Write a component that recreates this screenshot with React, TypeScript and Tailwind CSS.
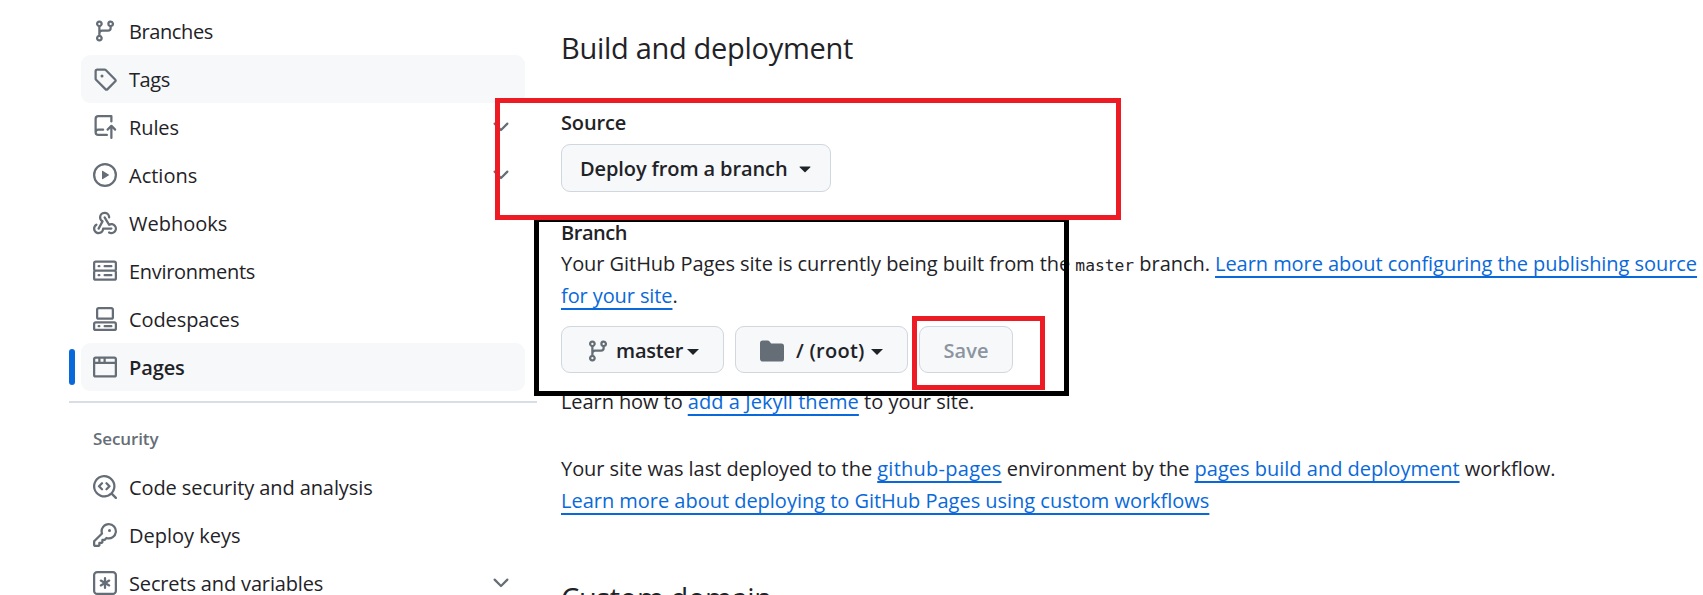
import type { ReactNode } from "react";

const icons = {
  branch: "M9.5 3.25a2.25 2.25 0 1 1 3 2.122V6A2.5 2.5 0 0 1 10 8.5H6a1 1 0 0 0-1 1v1.128a2.251 2.251 0 1 1-1.5 0V5.372a2.25 2.25 0 1 1 1.5 0v1.836A2.493 2.493 0 0 1 6 7h4a1 1 0 0 0 1-1v-.628A2.25 2.25 0 0 1 9.5 3.25Zm-6 0a.75.75 0 1 0 1.5 0 .75.75 0 0 0-1.5 0Zm8.25-.75a.75.75 0 1 0 0 1.5.75.75 0 0 0 0-1.5ZM4.25 12a.75.75 0 1 0 0 1.5.75.75 0 0 0 0-1.5Z",
  tag: "M1 7.775V2.75C1 1.784 1.784 1 2.75 1h5.025c.464 0 .91.184 1.238.513l6.25 6.25a1.75 1.75 0 0 1 0 2.474l-5.026 5.026a1.75 1.75 0 0 1-2.474 0l-6.25-6.25A1.752 1.752 0 0 1 1 7.775Zm1.5 0c0 .066.026.13.073.177l6.25 6.25a.25.25 0 0 0 .354 0l5.025-5.025a.25.25 0 0 0 0-.354l-6.25-6.25a.25.25 0 0 0-.177-.073H2.75a.25.25 0 0 0-.25.25ZM6 5a1 1 0 1 1 0 2 1 1 0 0 1 0-2Z",
  repoPush: "M1 2.5A2.5 2.5 0 0 1 3.5 0h8.75a.75.75 0 0 1 .75.75v3.5a.75.75 0 0 1-1.5 0V1.5h-8a1 1 0 0 0-1 1v6.708A2.493 2.493 0 0 1 3.5 9h3.25a.75.75 0 0 1 0 1.5H3.5a1 1 0 0 0 0 2h5.75a.75.75 0 0 1 0 1.5H3.5A2.5 2.5 0 0 1 1 11.5Zm13.23 7.79h-.001l-1.224-1.224v6.184a.75.75 0 0 1-1.5 0V9.066L10.28 10.29a.75.75 0 0 1-1.06-1.061l2.505-2.504a.75.75 0 0 1 1.06 0L15.29 9.23a.751.751 0 0 1-.018 1.042.751.751 0 0 1-1.042.018Z",
  play: "M8 0a8 8 0 1 1 0 16A8 8 0 0 1 8 0ZM1.5 8a6.5 6.5 0 1 0 13 0 6.5 6.5 0 0 0-13 0Zm4.879-2.773 4.264 2.559a.25.25 0 0 1 0 .428l-4.264 2.559A.25.25 0 0 1 6 10.559V5.442a.25.25 0 0 1 .379-.215Z",
  webhook: "M5.5 4.25a2.25 2.25 0 0 1 4.5 0 .75.75 0 0 0 1.5 0 3.75 3.75 0 1 0-6.14 2.889l-2.272 4.258a.75.75 0 0 0 1.324.706L7 7.25a.75.75 0 0 0-.309-1.015A2.25 2.25 0 0 1 5.5 4.25Z M7.364 3.607a.75.75 0 0 1 1.03.257l2.608 4.349a3.75 3.75 0 1 1-.628 6.785.75.75 0 0 1 .752-1.299 2.25 2.25 0 1 0-.033-3.88.75.75 0 0 1-1.03-.256L7.107 4.636a.75.75 0 0 1 .257-1.03Z M2.9 8.776A.75.75 0 0 1 2.625 9.8 2.25 2.25 0 1 0 6 11.75a.75.75 0 0 1 .75-.751h5.5a.75.75 0 0 1 0 1.5H7.425a3.751 3.751 0 1 1-5.55-3.998.75.75 0 0 1 1.024.274Z",
  server: "M1.75 1h12.5c.966 0 1.75.784 1.75 1.75v4c0 .372-.116.717-.314 1 .198.283.314.628.314 1v4a1.75 1.75 0 0 1-1.75 1.75H1.75A1.75 1.75 0 0 1 0 12.75v-4c0-.358.109-.707.314-1a1.739 1.739 0 0 1-.314-1v-4C0 1.784.784 1 1.75 1ZM1.5 2.75v4c0 .138.112.25.25.25h12.5a.25.25 0 0 0 .25-.25v-4a.25.25 0 0 0-.25-.25H1.75a.25.25 0 0 0-.25.25Zm.25 5.75a.25.25 0 0 0-.25.25v4c0 .138.112.25.25.25h12.5a.25.25 0 0 0 .25-.25v-4a.25.25 0 0 0-.25-.25ZM7 4.75A.75.75 0 0 1 7.75 4h4.5a.75.75 0 0 1 0 1.5h-4.5A.75.75 0 0 1 7 4.75ZM7.75 10h4.5a.75.75 0 0 1 0 1.5h-4.5a.75.75 0 0 1 0-1.5ZM3 4.75A.75.75 0 0 1 3.75 4h.5a.75.75 0 0 1 0 1.5h-.5A.75.75 0 0 1 3 4.75ZM3.75 10h.5a.75.75 0 0 1 0 1.5h-.5a.75.75 0 0 1 0-1.5Z",
  codespaces: "M0 11.25c0-.966.784-1.75 1.75-1.75h12.5c.966 0 1.75.784 1.75 1.75v3A1.75 1.75 0 0 1 14.25 16H1.75A1.75 1.75 0 0 1 0 14.25Zm2-9.5C2 .784 2.784 0 3.75 0h8.5C13.216 0 14 .784 14 1.75v5a1.75 1.75 0 0 1-1.75 1.75h-8.5A1.75 1.75 0 0 1 2 6.75Zm1.75-.25a.25.25 0 0 0-.25.25v5c0 .138.112.25.25.25h8.5a.25.25 0 0 0 .25-.25v-5a.25.25 0 0 0-.25-.25Zm-2 9.5a.25.25 0 0 0-.25.25v3c0 .138.112.25.25.25h12.5a.25.25 0 0 0 .25-.25v-3a.25.25 0 0 0-.25-.25Z M7 12.75a.75.75 0 0 1 .75-.75h4.5a.75.75 0 0 1 0 1.5h-4.5a.75.75 0 0 1-.75-.75Zm-4 0a.75.75 0 0 1 .75-.75h.5a.75.75 0 0 1 0 1.5h-.5a.75.75 0 0 1-.75-.75Z",
  browser: "M0 2.75C0 1.784.784 1 1.75 1h12.5c.966 0 1.75.784 1.75 1.75v10.5A1.75 1.75 0 0 1 14.25 15H1.75A1.75 1.75 0 0 1 0 13.25ZM14.5 6h-13v7.25c0 .138.112.25.25.25h12.5a.25.25 0 0 0 .25-.25Zm-6-3.5v2h6V2.75a.25.25 0 0 0-.25-.25ZM5 2.5v2h2v-2Zm-3.25 0a.25.25 0 0 0-.25.25V4.5h2v-2Z",
  codescan: "M8.47 4.97a.75.75 0 0 0 0 1.06L9.94 7.5 8.47 8.97a.75.75 0 1 0 1.06 1.06l2-2a.75.75 0 0 0 0-1.06l-2-2a.75.75 0 0 0-1.06 0ZM6.53 6.03a.75.75 0 0 0-1.06-1.06l-2 2a.75.75 0 0 0 0 1.06l2 2a.75.75 0 1 0 1.06-1.06L5.06 7.5l1.47-1.47Z M12.246 13.307a7.501 7.501 0 1 1 1.06-1.06l2.474 2.473a.749.749 0 1 1-1.06 1.06l-2.474-2.473ZM1.5 7.5a6.002 6.002 0 0 0 3.608 5.504 6.002 6.002 0 0 0 6.486-1.117.748.748 0 0 1 .292-.293A6 6 0 1 0 1.5 7.5Z",
  key: "M10.5 0a5.499 5.499 0 1 1-1.288 10.848l-.932.932a.749.749 0 0 1-.53.22H7v.75a.749.749 0 0 1-.22.53l-.5.5a.749.749 0 0 1-.53.22H5v.75a.749.749 0 0 1-.22.53l-.5.5a.749.749 0 0 1-.53.22h-2A1.75 1.75 0 0 1 0 14.25v-2c0-.199.079-.389.22-.53l4.932-4.932A5.5 5.5 0 0 1 10.5 0Zm-4 5.5c-.001.431.069.86.205 1.269a.75.75 0 0 1-.181.768L1.5 12.56v1.69c0 .138.112.25.25.25h1.69l.06-.06v-1.19a.75.75 0 0 1 .75-.75h1.19l.06-.06v-1.19a.75.75 0 0 1 .75-.75h1.19l1.023-1.025a.75.75 0 0 1 .768-.18A4 4 0 1 0 6.5 5.5ZM11 6a1 1 0 1 1 0-2 1 1 0 0 1 0 2Z",
  keyAsterisk: "M0 2.75A2.75 2.75 0 0 1 2.75 0h10.5A2.75 2.75 0 0 1 16 2.75v10.5A2.75 2.75 0 0 1 13.25 16H2.75A2.75 2.75 0 0 1 0 13.25ZM2.75 1.5c-.69 0-1.25.56-1.25 1.25v10.5c0 .69.56 1.25 1.25 1.25h10.5c.69 0 1.25-.56 1.25-1.25V2.75c0-.69-.56-1.25-1.25-1.25Z M8 4a.75.75 0 0 1 .75.75V6.7l1.69-.975a.75.75 0 0 1 .75 1.3L9.5 8l1.69.976a.75.75 0 0 1-.75 1.298L8.75 9.3v1.951a.75.75 0 0 1-1.5 0V9.299l-1.69.976a.75.75 0 0 1-.75-1.3L6.5 8l-1.69-.975a.75.75 0 0 1 .75-1.3l1.69.976V4.75A.75.75 0 0 1 8 4Z",
  chevron: "M12.78 5.22a.749.749 0 0 1 0 1.06l-4.25 4.25a.749.749 0 0 1-1.06 0L3.22 6.28a.749.749 0 1 1 1.06-1.06L8 8.939l3.72-3.719a.749.749 0 0 1 1.06 0Z",
  triangle: "m4.427 7.427 3.396 3.396a.25.25 0 0 0 .354 0l3.396-3.396A.25.25 0 0 0 11.396 7H4.604a.25.25 0 0 0-.177.427Z",
  folder: "M1.75 1A1.75 1.75 0 0 0 0 2.75v10.5C0 14.216.784 15 1.75 15h12.5A1.75 1.75 0 0 0 16 13.25v-8.5A1.75 1.75 0 0 0 14.25 3H7.5a.25.25 0 0 1-.2-.1l-.9-1.2C6.07 1.26 5.55 1 5 1H1.75Z",
};

type IconName = keyof typeof icons;

function Icon({ name, className = "text-[#656d76]" }: { name: IconName; className?: string }) {
  return (
    <svg viewBox="0 0 16 16" fill="currentColor" className={`size-6 shrink-0 ${className}`}>
      <path d={icons[name]} />
    </svg>
  );
}

type Item = { label: string; icon: IconName; tracking?: string; hovered?: boolean; active?: boolean; expandable?: boolean };

const codeItems: Item[] = [
  { label: "Branches", icon: "branch", tracking: "tracking-[-0.4px]" },
  { label: "Tags", icon: "tag", tracking: "tracking-[-0.4px]", hovered: true },
  { label: "Rules", icon: "repoPush", tracking: "tracking-[-0.1px]", expandable: true },
  { label: "Actions", icon: "play", expandable: true },
  { label: "Webhooks", icon: "webhook" },
  { label: "Environments", icon: "server", tracking: "tracking-[-0.3px]" },
  { label: "Codespaces", icon: "codespaces", tracking: "tracking-[-0.1px]" },
  { label: "Pages", icon: "browser", tracking: "tracking-[-0.1px]", active: true },
];

const securityItems: Item[] = [
  { label: "Code security and analysis", icon: "codescan", tracking: "tracking-[-0.09px]" },
  { label: "Deploy keys", icon: "key" },
  { label: "Secrets and variables", icon: "keyAsterisk", tracking: "tracking-[-0.15px]", expandable: true },
];

function NavItem({ label, icon, tracking = "", hovered, active, expandable }: Item) {
  return (
    <li className="flex h-12 items-center">
      <span className={`h-9 w-1.5 shrink-0 rounded-full ${active ? "bg-[#0969da]" : ""}`} />
      <a className={`ml-1.5 flex h-12 w-[444px] items-center gap-3 rounded-[9px] px-3 ${hovered || active ? "bg-[#f6f8fa]" : ""}`}>
        <Icon name={icon} />
        <span className={`grow pt-0.5 ${tracking} ${active ? "font-semibold" : ""}`}>{label}</span>
        {expandable && <Icon name="chevron" />}
      </a>
    </li>
  );
}

function Link({ children, className = "" }: { children: ReactNode; className?: string }) {
  return (
    <a className={`text-[#0969da] underline decoration-2 underline-offset-[5px] [text-decoration-skip-ink:none] ${className}`}>
      {children}
    </a>
  );
}

function Caret() {
  return <span className="mt-1 h-0 w-0 border-x-6 border-t-6 border-x-transparent border-t-[#1f2328]" />;
}

const button = "flex items-center rounded-[9px] border border-[#d0d7de] bg-[#f6f8fa] font-semibold";

export default function App() {
  return (
    <div className="relative flex h-[595px] w-[1703px] overflow-hidden bg-white font-['Open_Sans','Noto_Sans',sans-serif] text-[20px] leading-8 whitespace-nowrap text-[#1f2328]">
      <nav className="ml-[69px] w-[468px] shrink-0 pt-[7px]">
        <ul>
          {codeItems.map((item) => (
            <NavItem key={item.label} {...item} />
          ))}
        </ul>
        <hr className="mt-2.5 border-t-2 border-[#d8dee4]" />
        <h3 className="mt-5 mb-2 ml-6 text-[17px] font-semibold tracking-[-0.1px] text-[#656d76]">Security</h3>
        <ul>
          {securityItems.map((item) => (
            <NavItem key={item.label} {...item} />
          ))}
        </ul>
      </nav>

      <main className="ml-6 grow pt-[26px]">
        <h2 className="text-[29px] leading-[44px] tracking-[-0.3px]">Build and deployment</h2>

        <h4 className="mt-[37px] font-semibold tracking-[-0.15px]">Source</h4>
        <button className={`${button} mt-[5px] h-12 w-[270px] pl-[18px]`}>
          <span className="w-[213px] pt-0.5 text-left tracking-[-0.1px]">Deploy from a branch</span>
          <Icon name="triangle" className="text-[#1f2328]" />
        </button>

        <h4 className="mt-[25px] font-semibold tracking-[-0.45px]">Branch</h4>
        <p className="-mt-px tracking-[-0.05px]">
          Your GitHub Pages site is currently being built from the{" "}
          <code className="font-['DejaVu_Sans_Mono',monospace] text-[16.3px] leading-none tracking-normal">master</code> branch.{" "}
          <Link>Learn more about configuring the publishing source</Link>
          <br />
          <Link className="tracking-[-0.1px]">for your site</Link>.
        </p>

        <div className="mt-3.5 flex h-[47px] gap-[11px]">
          <button className={`${button} w-[163px] pl-6`}>
            <Icon name="branch" className="mt-0.5 text-[#656d76]" />
            <span className="mr-1 ml-1.5 pt-0.5 tracking-[-0.2px]">master</span>
            <Caret />
          </button>
          <button className={`${button} w-[173px] pl-6`}>
            <Icon name="folder" className="mt-0.5 text-[#656d76]" />
            <span className="mr-1.5 ml-3 pt-0.5 tracking-[0.25px]">/ (root)</span>
            <Caret />
          </button>
          <button disabled className={`${button} w-[94px] justify-center pt-0.5 text-[#8c959f]`}>
            Save
          </button>
        </div>

        <p className="mt-[13px]">
          <span className="tracking-[-0.08px]">Learn how to </span>
          <Link className="tracking-[0.07px]">add a Jekyll theme</Link> to your site.
        </p>

        <p className="mt-[35px]">
          <span className="tracking-[-0.05px]">Your site was last deployed to the </span>
          <Link className="tracking-[0.26px]">github-pages</Link>
          <span className="tracking-[-0.04px]"> environment by the </span>
          <Link>pages build and deployment</Link> workflow.
          <br />
          <Link className="tracking-[-0.02px]">Learn more about deploying to GitHub Pages using custom workflows</Link>
        </p>

        <h2 className="mt-[59px] text-[29px] leading-[44px] tracking-[-0.35px]">Custom domain</h2>
      </main>

      <div className="pointer-events-none absolute top-[217px] left-[534px] h-[179px] w-[535px] border-5 border-black" />
      <div className="pointer-events-none absolute top-[98px] left-[495px] h-[122px] w-[626px] border-5 border-[#ed1c24]" />
      <div className="pointer-events-none absolute top-[316px] left-[912px] h-[74px] w-[133px] border-5 border-[#ed1c24]" />
    </div>
  );
}
